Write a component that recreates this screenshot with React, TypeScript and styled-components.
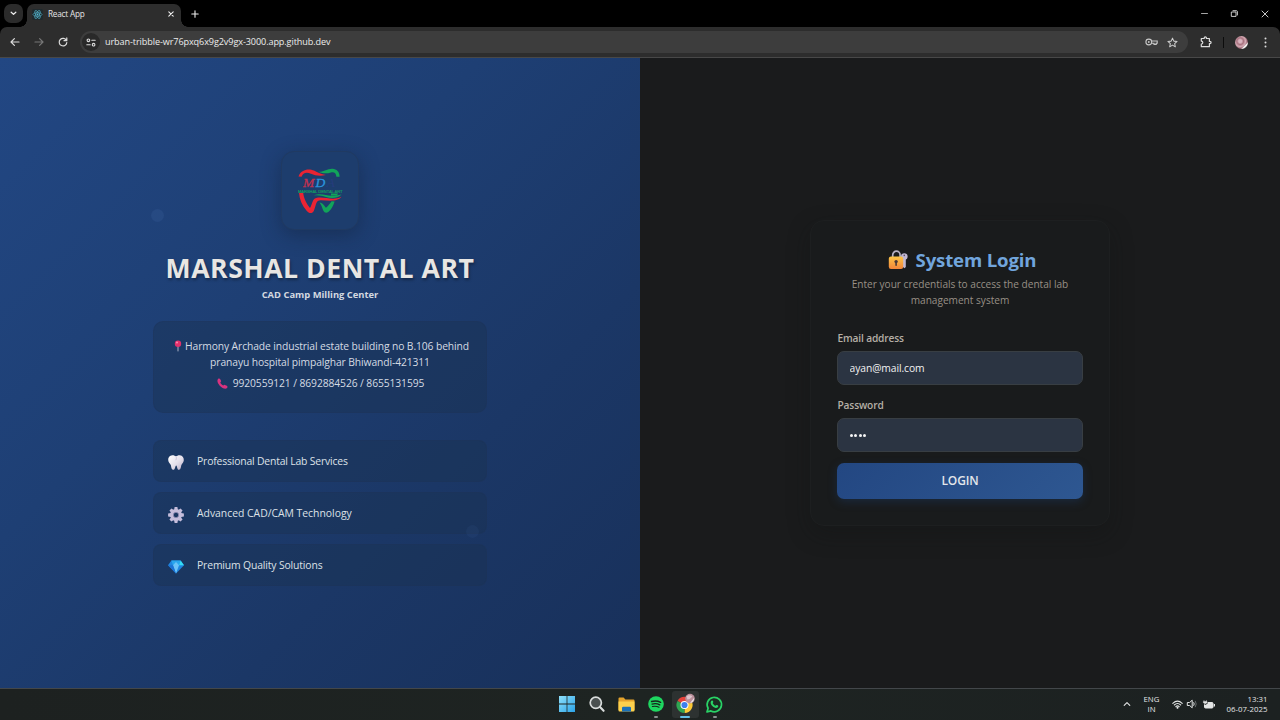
import React from "react";
import styled, { createGlobalStyle, css } from "styled-components";

const Global = createGlobalStyle`
  *, *::before, *::after { box-sizing: border-box; }
  html, body { margin: 0; padding: 0; }
  body { width: 1280px; height: 720px; overflow: hidden; background: #000; font-family: "Open Sans", "Noto Sans", sans-serif; }
  svg { display: block; flex: none; overflow: visible; }
`;

const Screen = styled.div`
  display: flex;
  flex-direction: column;
  width: 1280px;
  height: 720px;
`;

/* ---------- browser chrome ---------- */

const TabStrip = styled.div`
  display: flex;
  height: 27px;
  background: #000;
  padding-left: 4px;
`;

const TabMenuButton = styled.div`
  display: flex;
  align-items: center;
  justify-content: center;
  width: 19px;
  height: 19px;
  margin: 4px 4px 0 0;
  border-radius: 7px;
  background: #2b2b2b;
`;

const Tab = styled.div`
  position: relative;
  display: flex;
  align-items: center;
  width: 154px;
  height: 23px;
  margin-top: 4px;
  padding: 0 7px 3px 5px;
  border-radius: 7px 7px 0 0;
  background: #2d2d2d;
  &::before, &::after {
    content: "";
    position: absolute;
    bottom: 0;
    width: 7px;
    height: 7px;
  }
  &::before { left: -7px; background: radial-gradient(circle at 0 0, transparent 6.5px, #2d2d2d 7px); }
  &::after { right: -7px; background: radial-gradient(circle at 100% 0, transparent 6.5px, #2d2d2d 7px); }
`;

const TabTitle = styled.span`
  flex: 1;
  margin-left: 5px;
  font-size: 8.2px;
  line-height: 12px;
  letter-spacing: -0.2px;
  color: #e6e6e6;
`;

const NewTab = styled.div`
  display: flex;
  align-items: center;
  margin-left: 9.5px;
`;

const WindowControls = styled.div`
  display: flex;
  align-items: center;
  gap: 23px;
  margin-left: auto;
  padding-right: 11.5px;
`;

const Toolbar = styled.div`
  display: flex;
  align-items: center;
  height: 31px;
  padding: 0 13px 0 9px;
  border-bottom: 1px solid #484848;
  border-radius: 7px 7px 0 0;
  background: #2d2d2d;
`;

const NavButtons = styled.div`
  display: flex;
  align-items: center;
  gap: 12px;
  width: 71px;
`;

const AddressBar = styled.div`
  display: flex;
  align-items: center;
  width: 1108px;
  height: 22px;
  padding: 0 10.5px 0 2px;
  border-radius: 11px;
  background: #3d3d3d;
`;

const SiteInfo = styled.div`
  display: flex;
  align-items: center;
  justify-content: center;
  width: 18px;
  height: 18px;
  border-radius: 50%;
  background: #292929;
`;

const Url = styled.span`
  flex: 1;
  margin-left: 5px;
  font-size: 9.1px;
  line-height: 14px;
  letter-spacing: -0.1px;
  color: #ececec;
`;

const AddressActions = styled.div`
  display: flex;
  align-items: center;
  gap: 9px;
`;

const ToolbarActions = styled.div`
  display: flex;
  align-items: center;
  margin-left: auto;
`;

const Divider = styled.div`
  width: 1px;
  height: 11px;
  margin: 0 11px 0 11px;
  background: #0c0c0c;
`;

const Avatar = styled.div`
  width: 13px;
  height: 13px;
  margin-right: 16px;
  border-radius: 50%;
  background: linear-gradient(135deg, transparent 72%, #f2eeee 76%), radial-gradient(circle at 40% 40%, #d9b4bf 0 14%, #a8727f 30%, #d3aab4 48%, #94606d 66%, #b98c97);
`;

/* ---------- page ---------- */

const Page = styled.main`
  display: flex;
  height: 630px;
`;

const BrandPanel = styled.section`
  position: relative;
  display: flex;
  flex-direction: column;
  align-items: center;
  width: 640px;
  padding-top: 93px;
  background: linear-gradient(135deg, #224783 0%, #1e3f74 38%, #1b3766 68%, #18305a 100%);
`;

const Bubble = styled.div<{ $x: number; $y: number; $size: number; $alpha: number }>`
  position: absolute;
  left: ${(p) => p.$x}px;
  top: ${(p) => p.$y}px;
  width: ${(p) => p.$size}px;
  height: ${(p) => p.$size}px;
  border-radius: 50%;
  background: rgba(90, 130, 200, ${(p) => p.$alpha});
`;

const LogoCard = styled.div`
  display: flex;
  align-items: center;
  justify-content: center;
  width: 78px;
  height: 79px;
  border: 1px solid #203a62;
  border-radius: 13px;
  background: #1d3d6d;
  box-shadow: 0 5px 20px rgba(16, 28, 50, 0.42);
`;

const BrandName = styled.h1`
  margin: 20px 0 0;
  font-size: 26.6px;
  font-weight: 700;
  line-height: 36px;
  letter-spacing: 0.52px;
  white-space: nowrap;
  color: #e8e6e3;
  text-shadow: 1px 2px 3px rgba(0, 0, 0, 0.35);
`;

const BrandTagline = styled.p`
  margin: 2px 0 0;
  font-size: 9.4px;
  font-weight: 700;
  line-height: 14px;
  white-space: nowrap;
  color: #d4d9e0;
`;

const panelSurface = css`
  width: 334px;
  border: 1px solid rgba(30, 52, 88, 0.25);
  background: rgba(27, 50, 82, 0.42);
`;

const ContactCard = styled.div`
  ${panelSurface}
  height: 92px;
  margin-top: 19px;
  padding: 16px 0;
  border-radius: 10px;
  text-align: center;
`;

const ContactLine = styled.div<{ $gap?: number; $indent?: number; $tracking?: number }>`
  display: flex;
  align-items: center;
  justify-content: center;
  height: 16px;
  margin-top: ${(p) => p.$gap ?? 0}px;
  padding-left: ${(p) => p.$indent ?? 0}px;
  font-size: 10.3px;
  line-height: 16px;
  letter-spacing: ${(p) => p.$tracking ?? 0}px;
  white-space: nowrap;
  color: #d5dbe3;
`;

const IconGap = styled.span<{ $w: number }>`
  flex: none;
  width: ${(p) => p.$w}px;
`;

const FeatureList = styled.ul`
  display: flex;
  flex-direction: column;
  gap: 10px;
  margin: 27px 0 0;
  padding: 0;
  list-style: none;
`;

const Feature = styled.li`
  ${panelSurface}
  display: flex;
  align-items: center;
  height: 42px;
  padding-left: 14px;
  border-radius: 8px;
`;

const FeatureText = styled.span<{ $tracking: number }>`
  margin-left: 13px;
  font-size: 10.4px;
  line-height: 16px;
  letter-spacing: ${(p) => p.$tracking}px;
  white-space: nowrap;
  color: #dde1e7;
`;

const FeatureIcon = styled.span`
  padding-top: 3px;
`;

const LoginPanel = styled.section`
  display: flex;
  flex-direction: column;
  align-items: center;
  width: 640px;
  padding-top: 162px;
  background: #1a1b1c;
`;

const LoginCard = styled.form`
  display: flex;
  flex-direction: column;
  width: 300px;
  height: 306px;
  padding: 27px 26px 0;
  border: 1px solid #1d1f20;
  border-radius: 14px;
  background: #191b1c;
  box-shadow: 0 8px 22px rgba(18, 19, 20, 0.35);
`;

const LoginTitle = styled.h2`
  display: flex;
  align-items: center;
  justify-content: center;
  gap: 8px;
  height: 24px;
  margin: 0;
  padding-left: 4px;
  font-size: 18.6px;
  font-weight: 700;
  line-height: 24px;
  letter-spacing: -0.15px;
  white-space: nowrap;
  color: #71a5dc;
`;

const LoginHint = styled.p`
  margin: 4px 0 0;
  font-size: 10.1px;
  line-height: 16px;
  text-align: center;
  white-space: nowrap;
  color: #989086;
`;

const Label = styled.label<{ $top: number }>`
  margin-top: ${(p) => p.$top}px;
  padding-left: 0.5px;
  font-size: 10.2px;
  font-weight: 600;
  line-height: 14px;
  letter-spacing: -0.16px;
  color: #b5afa6;
`;

const Input = styled.input`
  width: 246px;
  height: 34px;
  margin: 6px 0 0;
  padding: 0 11.5px;
  border: 1px solid #383e43;
  border-radius: 7px;
  outline: none;
  background: #2b3442;
  font-family: "Open Sans", "Noto Sans", sans-serif;
  font-size: 10.3px;
  letter-spacing: -0.07px;
  color: #f2f2f2;
`;

const PasswordField = styled.div`
  display: flex;
  align-items: center;
  gap: 1.3px;
  width: 246px;
  height: 34px;
  margin-top: 6px;
  padding: 1px 0 0 12px;
  border: 1px solid #383e43;
  border-radius: 7px;
  background: #2b3442;
`;

const Dot = styled.span`
  width: 3px;
  height: 3px;
  border-radius: 50%;
  background: #f5f5f5;
`;

const LoginButton = styled.button`
  width: 246px;
  height: 36px;
  margin: 11px 0 0;
  padding: 0;
  border: 0;
  border-radius: 7px;
  background: linear-gradient(135deg, #234782, #2e5791);
  box-shadow: 0 3px 10px rgba(30, 66, 120, 0.35);
  font-family: "Open Sans", "Noto Sans", sans-serif;
  font-size: 12px;
  font-weight: 600;
  line-height: 36px;
  letter-spacing: -0.1px;
  color: #e3e6ea;
`;

/* ---------- taskbar ---------- */

const Taskbar = styled.footer`
  display: flex;
  height: 32px;
  padding-left: 553.5px;
  border-top: 1px solid #43474a;
  background: linear-gradient(90deg, #1d2120, #1e2422 50%, #1c2121);
`;

const TaskSlot = styled.div<{ $active?: boolean }>`
  position: relative;
  display: flex;
  align-items: center;
  justify-content: center;
  width: 27px;
  height: 27px;
  margin: 2px 2.5px 0 0;
  border-radius: 3px;
  background: ${(p) => (p.$active ? "#2d3231" : "transparent")};
`;

const RunMark = styled.i<{ $active?: boolean }>`
  position: absolute;
  bottom: 0;
  width: ${(p) => (p.$active ? 10 : 4)}px;
  height: 2px;
  border-radius: 1px;
  background: ${(p) => (p.$active ? "#62bfe8" : "#8b9190")};
`;

const TaskIcon = styled.span`
  margin-bottom: 1px;
`;

const Tray = styled.div`
  display: flex;
  align-items: center;
  margin-left: auto;
  padding: 0 12.5px 1px 0;
  color: #e4e6e6;
`;

const TrayText = styled.div<{ $w: number; $align: "center" | "right" }>`
  width: ${(p) => p.$w}px;
  font-size: 7.8px;
  line-height: 10.5px;
  letter-spacing: 0.04px;
  text-align: ${(p) => p.$align};
  white-space: nowrap;
`;

const TrayIcons = styled.div`
  display: flex;
  align-items: center;
  gap: 4.5px;
  margin: 0 11px 0 8px;
`;

/* ---------- drawings ---------- */

type StrokeProps = { w: number; h: number; box: string; d: string; color?: string; sw?: number };

const Stroke = ({ w, h, box, d, color = "#dcdcdc", sw = 1.2 }: StrokeProps) => (
  <svg width={w} height={h} viewBox={box} fill="none" stroke={color} strokeWidth={sw} strokeLinecap="round" strokeLinejoin="round">
    <path d={d} />
  </svg>
);

const ReactMark = () => (
  <svg width="11" height="11" viewBox="0 0 22 22" fill="none" stroke="#4fa9c0" strokeWidth="1.4">
    <rect width="22" height="22" rx="3" fill="#1f2a2e" stroke="none" />
    <ellipse cx="11" cy="11" rx="9" ry="3.6" />
    <ellipse cx="11" cy="11" rx="9" ry="3.6" transform="rotate(60 11 11)" />
    <ellipse cx="11" cy="11" rx="9" ry="3.6" transform="rotate(120 11 11)" />
    <circle cx="11" cy="11" r="1.8" fill="#58bcd6" stroke="none" />
  </svg>
);

const Logo = () => (
  <svg width="50" height="46" viewBox="-2 0 50 46">
    <path d="M1.5 8.5 C4 1 12 0.2 17 2.6 C21 4.6 24 6.4 29 7 C23 8.4 18 7.6 14 5.8 C9 3.6 6 5.2 4.6 8.8 Z" fill="#ea2433" />
    <path d="M21.5 3.8 C27 4.4 31 -0.2 37 1 C41 2 42.6 5 42.6 8.8 L39.4 8.8 C39 5.2 37.4 3.8 34 4.4 C30 5.4 27 6 21.5 3.8 Z" fill="#12a45a" />
    <path d="M2 25 L6.2 25 C7 31 10 36.6 13 40 C15.6 36 15 30.6 20 29.8 C28 28.6 36 33 44.5 28.8 C41 34 32 32.6 24 32.2 C18.6 32 19.4 36.4 17 42.4 C15.4 46 12 45.6 9.8 43 C5 37.6 2.4 31 2 25 Z" fill="#ea2433" />
    <path d="M17 27.4 C24 24.6 29 28 35 27.8 C38 27.7 41 27 44.6 26.4 C40 30.6 34 30.4 29 29 C25 27.8 22 27 17 27.4 Z" fill="#12a45a" />
    <path d="M34 25.4 L41 25.4 L40 27.4 L34 27.6 Z" fill="#12a45a" />
    <path d="M22.5 34.5 C26 35 27 37.4 29 39.8 C31.4 37.6 33 35.6 34.6 33.2 L37.6 33.4 C36.4 37.6 34.4 41 31.6 43.8 C29.6 45.4 27.4 45 26.4 42.8 C25.2 40 24.6 37 22.5 34.5 Z" fill="#12a45a" />
    <g fontFamily="Liberation Serif, serif" fontStyle="italic" fontSize="13.5">
      <text x="6" y="19.2" fill="#c2314f" stroke="#c2314f" strokeWidth="0.3">M</text>
      <text x="18.5" y="19.2" fill="#2b95dc" stroke="#2b95dc" strokeWidth="0.3">D</text>
      <text x="29.5" y="19.2" fill="#263c7c">A</text>
    </g>
    <text x="1" y="24.6" fontFamily="Liberation Sans, sans-serif" fontSize="4" fill="#159a63" stroke="#159a63" strokeWidth="0.2">MARSHAL DENTAL ART</text>
  </svg>
);

const PinIcon = () => (
  <svg width="8" height="12" viewBox="0 0 8 12">
    <path d="M3.5 6 h1 v5 l-.5 .8 -.5 -.8z" fill="#a9b0c4" />
    <circle cx="4" cy="3.7" r="3.2" fill="#e0306c" />
    <circle cx="3" cy="2.6" r="1" fill="#f58cae" />
  </svg>
);

const PhoneIcon = () => (
  <svg width="11" height="11" viewBox="0 0 11 11">
    <path d="M1.2 .8 C2 .1 2.9 .5 3.4 1.5 L4.1 3.1 C4.3 3.8 3.5 4.2 3.3 4.6 C3.8 5.8 5 7 6.3 7.6 C6.8 7.3 7.2 6.6 7.9 6.9 L9.8 7.8 C10.6 8.3 10.8 9.1 10.1 9.9 C8.8 11.2 6.4 10.9 3.6 8.5 C.6 5.7 -.4 2.6 1.2 .8Z" fill="#d9337f" />
  </svg>
);

const ToothIcon = () => (
  <svg width="16" height="15" viewBox="0 0 16 15">
    <defs>
      <linearGradient id="tooth" x1="0" y1="0" x2="1" y2="1">
        <stop offset="0" stopColor="#fff" />
        <stop offset=".55" stopColor="#e4dfea" />
        <stop offset="1" stopColor="#b9acc6" />
      </linearGradient>
    </defs>
    <path d="M4.3 .3 C6 .2 7 1 8 1.2 C9 1 10 .2 11.8 .3 C14.6 .5 16 2.8 15.8 5.2 C15.6 7.6 14 8.6 13.4 10 C12.8 11.6 13 14.6 11 14.8 C8.9 14.9 9.3 10.6 8.2 10.4 C7 10.6 7.4 14.9 5.2 14.8 C3.2 14.6 3.3 11.4 2.8 10 C2.2 8.6 .4 7.6 .2 5 C0 2.6 1.6 .5 4.3 .3Z" fill="url(#tooth)" />
    <path d="M8 1.4 C8.6 2.6 8.4 4 7.8 5.2" fill="none" stroke="#c4b9cf" strokeWidth=".8" />
  </svg>
);

const GearIcon = () => (
  <svg width="16" height="16" viewBox="-8 -8 16 16">
    <g fill="#c5bddb">
      {[0, 45, 90, 135, 180, 225, 270, 315].map((a) => (
        <path key={a} d="M-1.9 -5 L-1.4 -7.9 H1.4 L1.9 -5Z" transform={`rotate(${a})`} />
      ))}
    </g>
    <circle r="4.3" fill="none" stroke="#c5bddb" strokeWidth="3.2" />
    <circle r="2.7" fill="none" stroke="#a89cc4" strokeWidth=".6" />
  </svg>
);

const GemIcon = () => (
  <svg width="16" height="14" viewBox="0 0 16 14">
    <path d="M3.4 .6 H12.6 L16 5.2 L8 13.6 L0 5.2Z" fill="#1f86e0" />
    <path d="M3.4 .6 H12.6 L11 5.2 H5Z" fill="#2aa7ee" />
    <path d="M12.6 .6 L16 5.2 H11Z" fill="#35dcf4" />
    <path d="M5 5.2 L8 2 L11 5.2 L8 13.6Z" fill="#6cc3f8" />
    <path d="M0 5.2 H5 L8 13.6Z" fill="#1c72d4" />
  </svg>
);

const LockIcon = () => (
  <svg width="20" height="20" viewBox="0 0 20 20">
    <defs>
      <linearGradient id="lock" x1="0" y1="0" x2="0" y2="1">
        <stop offset="0" stopColor="#fcc547" />
        <stop offset="1" stopColor="#f2853a" />
      </linearGradient>
    </defs>
    <g fill="#c2b8d2">
      <circle cx="16.3" cy="6.6" r="3.3" />
      <path d="M15 8.6 H17.8 V17 L16.4 18.2 L15 17Z" />
      <circle cx="16.3" cy="5.4" r=".8" fill="#574f66" />
    </g>
    <path d="M4.7 8 V5.2 A3.7 4 0 0 1 12.1 5.2 V8" fill="none" stroke="#b5b1c4" strokeWidth="1.7" />
    <rect x=".8" y="6.6" width="14.4" height="12.4" rx="2.2" fill="url(#lock)" />
    <circle cx="8.1" cy="11.6" r="1.7" fill="#4a3837" />
    <rect x="7.3" y="12" width="1.6" height="4" rx=".7" fill="#4a3837" />
  </svg>
);

const WindowsIcon = () => (
  <svg width="16" height="16" viewBox="0 0 16 16">
    <defs>
      <linearGradient id="win" x1="0" y1="0" x2="1" y2="1">
        <stop offset="0" stopColor="#8fe0fb" />
        <stop offset="1" stopColor="#2ba3e8" />
      </linearGradient>
    </defs>
    <path d="M0 0H7.6V7.6H0Z M8.4 0H16V7.6H8.4Z M0 8.4H7.6V16H0Z M8.4 8.4H16V16H8.4Z" fill="url(#win)" />
  </svg>
);

const SearchIcon = () => (
  <svg width="16" height="16" viewBox="0 0 16 16" fill="none" stroke="#d9dcdc" strokeLinecap="round">
    <circle cx="6.8" cy="6.8" r="5.6" strokeWidth="1.7" fill="#4a5050" />
    <path d="M11 11 L14.6 14.8" strokeWidth="2.1" />
  </svg>
);

const FolderIcon = () => (
  <svg width="17" height="15" viewBox="0 0 17 15">
    <path d="M.5 1.6 Q.5 .5 1.6 .5 H5.6 L7.4 2.4 H15.4 Q16.5 2.4 16.5 3.5 V13 H.5Z" fill="#e5a32c" />
    <path d="M.5 4.4 H16.5 V13.4 Q16.5 14.5 15.4 14.5 H1.6 Q.5 14.5 .5 13.4Z" fill="#fbd04d" />
    <path d="M4 14.5 V11 Q4 9.8 5.2 9.8 H11.8 Q13 9.8 13 11 V14.5Z" fill="#1a70b8" />
  </svg>
);

const SpotifyIcon = () => (
  <svg width="16" height="16" viewBox="0 0 16 16">
    <circle cx="8" cy="8" r="7.8" fill="#1ed760" />
    <g fill="none" stroke="#17251c" strokeLinecap="round">
      <path d="M3.6 5.5 Q8.4 4 12.6 6.3" strokeWidth="1.5" />
      <path d="M4 8.1 Q8.2 6.9 11.8 8.9" strokeWidth="1.3" />
      <path d="M4.4 10.5 Q8 9.6 11 11.2" strokeWidth="1.1" />
    </g>
  </svg>
);

const ChromeIcon = () => (
  <svg width="22" height="22" viewBox="0 0 22 22">
    <path d="M10.5 12 L3.5 8 A8 8 0 0 1 17.5 8Z" fill="#e5423a" />
    <path d="M10.5 12 L17.5 8 A8 8 0 0 1 10.5 20Z" fill="#fbc935" />
    <path d="M10.5 12 L10.5 20 A8 8 0 0 1 3.5 8Z" fill="#2fa552" />
    <circle cx="10.5" cy="12" r="4" fill="#fff" />
    <circle cx="10.5" cy="12" r="3.1" fill="#3d80ec" />
    <circle cx="16" cy="5.6" r="4.8" fill="#b98f9b" />
    <path d="M12.4 3.6 Q15.4 1 18.4 3.4 Q16.4 6 13.4 6.4Z" fill="#dcc3ca" />
    <path d="M20 5 Q20.4 9 16 10.2Z" fill="#f1eded" />
  </svg>
);

const WhatsAppIcon = () => (
  <svg width="17" height="17" viewBox="0 0 17 17">
    <path d="M1 16 L2.1 12.2 A7.2 7.2 0 1 1 4.9 14.9Z" fill="#1c2a22" stroke="#29d366" strokeWidth="1.7" strokeLinejoin="round" />
    <path d="M5.8 4.6 C6.5 4.2 6.9 4.7 7.2 5.6 C7.5 6.4 6.8 6.6 6.7 7.2 C7.3 8.4 8.3 9.3 9.5 9.8 C10 9.5 10.3 8.7 10.9 9 C11.8 9.4 12.5 9.7 12.3 10.3 C11.9 11.7 10.5 12.2 9 11.7 C6.8 10.9 5.4 9.4 4.8 7.7 C4.4 6.3 4.9 5.1 5.8 4.6Z" fill="#29d366" />
  </svg>
);

const WifiIcon = () => (
  <svg width="11" height="9" viewBox="0 0 11 9" fill="none" stroke="#e4e6e6" strokeWidth="1.1" strokeLinecap="round">
    <path d="M.8 3.3 Q5.5 -1 10.2 3.3" />
    <path d="M2.3 5 Q5.5 2.1 8.7 5" />
    <path d="M3.8 6.6 Q5.5 5.1 7.2 6.6" />
    <circle cx="5.5" cy="7.8" r=".5" fill="#e4e6e6" />
  </svg>
);

const SpeakerIcon = () => (
  <svg width="11" height="10" viewBox="0 0 11 10" fill="none" stroke="#e4e6e6" strokeLinejoin="round" strokeLinecap="round">
    <path d="M.7 3.5 H2.6 L5.2 1.2 V8.8 L2.6 6.5 H.7Z" />
    <path d="M6.8 3.6 Q7.8 5 6.8 6.4" />
    <path d="M8.4 2.2 Q10.2 5 8.4 7.8" stroke="#666b6b" />
  </svg>
);

const BatteryIcon = () => (
  <svg width="12" height="9" viewBox="0 0 12 9">
    <rect x="1.5" y="2.5" width="8.5" height="5.5" rx="1" fill="#e4e6e6" stroke="#e4e6e6" />
    <rect x="10.8" y="4" width="1.2" height="2.5" fill="#e4e6e6" />
    <path d="M.3 .6 H4.6 V3.6 L2.4 5 L.3 3.6Z" fill="#1e2322" />
    <path d="M1 0 V1.4 M3.4 0 V1.4 M.4 1.5 H4 V2.8 L2.2 3.8 L.4 2.8Z" fill="#e4e6e6" stroke="#e4e6e6" strokeWidth=".5" />
  </svg>
);

const features = [
  { text: "Professional Dental Lab Services", icon: <ToothIcon />, tracking: -0.18 },
  { text: "Advanced CAD/CAM Technology", icon: <GearIcon />, tracking: -0.01 },
  { text: "Premium Quality Solutions", icon: <GemIcon />, tracking: -0.15 },
];

export default function App() {
  return (
    <Screen>
      <Global />
      <TabStrip>
        <TabMenuButton>
          <Stroke w={7} h={5} box="0 0 7 5" d="M1.2 1.2 L3.5 3.4 L5.8 1.2" color="#eee" sw={1.3} />
        </TabMenuButton>
        <Tab>
          <ReactMark />
          <TabTitle>React App</TabTitle>
          <Stroke w={6} h={6} box="0 0 6 6" d="M.8 .8 L5.2 5.2 M5.2 .8 L.8 5.2" color="#eee" sw={1.1} />
        </Tab>
        <NewTab>
          <Stroke w={8} h={8} box="0 0 8 8" d="M4 .8 V7.2 M.8 4 H7.2" color="#eee" sw={1.1} />
        </NewTab>
        <WindowControls>
          <Stroke w={7} h={7} box="0 0 7 7" d="M.5 3.5 H6.5" color="#cfcfcf" sw={0.8} />
          <Stroke w={7} h={7} box="0 0 7 7" d="M.7 2 H5 V6.4 H.7Z M2 .7 H5.4 Q6.4 .7 6.4 1.8 V5" color="#dedede" sw={0.9} />
          <Stroke w={8} h={8} box="0 0 8 8" d="M1 1 L7 7 M7 1 L1 7" color="#dedede" sw={0.9} />
        </WindowControls>
      </TabStrip>

      <Toolbar>
        <NavButtons>
          <Stroke w={12} h={10} box="0 0 12 10" d="M10 5 H2 M5.4 1.6 L2 5 L5.4 8.4" />
          <Stroke w={12} h={10} box="0 0 12 10" d="M2 5 H10 M6.6 1.6 L10 5 L6.6 8.4" color="#777" />
          <Stroke w={12} h={10} box="0 0 12 10" d="M9.4 3.4 A3.8 3.8 0 1 0 9.8 5.6 M9.8 .9 V3.7 H7" />
        </NavButtons>
        <AddressBar>
          <SiteInfo>
            <Stroke w={10} h={9} box="0 0 10 9" d="M5.8 2.3 H9.2 M.8 6.7 H4.2 M2.4 2.3 m-1.3 0 a1.3 1.3 0 1 0 2.6 0 a1.3 1.3 0 1 0 -2.6 0 M7.6 6.7 m-1.3 0 a1.3 1.3 0 1 0 2.6 0 a1.3 1.3 0 1 0 -2.6 0" sw={1.1} />
          </SiteInfo>
          <Url>urban-tribble-wr76pxq6x9g2v9gx-3000.app.github.dev</Url>
          <AddressActions>
            <svg width="13" height="8" viewBox="0 0 13 8" fill="none" stroke="#c9c9c9" strokeWidth="1.1">
              <circle cx="3.8" cy="4" r="2.9" />
              <circle cx="3.8" cy="4" r=".9" fill="#c9c9c9" stroke="none" />
              <path d="M6.5 3 H12.2 V5.2 H11.2 V6.4 H9 V5.2 H6.5" />
            </svg>
            <Stroke w={11} h={11} box="0 0 24 24" d="M12 2.5 L14.9 9 L22 9.7 L16.7 14.4 L18.2 21.4 L12 17.7 L5.8 21.4 L7.3 14.4 L2 9.7 L9.1 9Z" color="#cfcfcf" sw={2.2} />
          </AddressActions>
        </AddressBar>
        <ToolbarActions>
          <Stroke w={12} h={12} box="0 0 12 12" d="M1.3 2.5 H4.2 V1.9 A1.1 1.1 0 0 1 6.4 1.9 V2.5 H9.4 V5.4 H10 A1.1 1.1 0 0 1 10 7.6 H9.4 V10.7 H1.3 V8.1 A1.5 1.5 0 0 0 1.3 5.1Z" sw={1.2} />
          <Divider />
          <Avatar />
          <svg width="3" height="11" viewBox="0 0 3 11" fill="#dcdcdc">
            <circle cx="1.5" cy="1.5" r="1" />
            <circle cx="1.5" cy="5.5" r="1" />
            <circle cx="1.5" cy="9.5" r="1" />
          </svg>
        </ToolbarActions>
      </Toolbar>

      <Page>
        <BrandPanel>
          <LogoCard>
            <Logo />
          </LogoCard>
          <BrandName>MARSHAL DENTAL ART</BrandName>
          <BrandTagline>CAD Camp Milling Center</BrandTagline>
          <ContactCard>
            <ContactLine $indent={3} $tracking={-0.1}>
              <PinIcon />
              <IconGap $w={3} />
              Harmony Archade industrial estate building no B.106 behind
            </ContactLine>
            <ContactLine $tracking={-0.1}>pranayu hospital pimpalghar Bhiwandi-421311</ContactLine>
            <ContactLine $gap={5} $indent={1} $tracking={-0.09}>
              <PhoneIcon />
              <IconGap $w={5} />
              9920559121 / 8692884526 / 8655131595
            </ContactLine>
          </ContactCard>
          <FeatureList>
            {features.map((f) => (
              <Feature key={f.text}>
                <FeatureIcon>{f.icon}</FeatureIcon>
                <FeatureText $tracking={f.tracking}>{f.text}</FeatureText>
              </Feature>
            ))}
          </FeatureList>
          <Bubble $x={151} $y={151} $size={13} $alpha={0.12} />
          <Bubble $x={466} $y={467} $size={13} $alpha={0.07} />
        </BrandPanel>

        <LoginPanel>
          <LoginCard>
            <LoginTitle>
              <LockIcon />
              System Login
            </LoginTitle>
            <LoginHint>
              Enter your credentials to access the dental lab
              <br />
              management system
            </LoginHint>
            <Label $top={23}>Email address</Label>
            <Input defaultValue="ayan@mail.com" />
            <Label $top={13}>Password</Label>
            <PasswordField>
              <Dot />
              <Dot />
              <Dot />
              <Dot />
            </PasswordField>
            <LoginButton type="button">LOGIN</LoginButton>
          </LoginCard>
        </LoginPanel>
      </Page>

      <Taskbar>
        <TaskSlot><TaskIcon><WindowsIcon /></TaskIcon></TaskSlot>
        <TaskSlot><TaskIcon><SearchIcon /></TaskIcon></TaskSlot>
        <TaskSlot><TaskIcon><FolderIcon /></TaskIcon></TaskSlot>
        <TaskSlot><TaskIcon><SpotifyIcon /></TaskIcon><RunMark /></TaskSlot>
        <TaskSlot $active><TaskIcon><ChromeIcon /></TaskIcon><RunMark $active /></TaskSlot>
        <TaskSlot><TaskIcon><WhatsAppIcon /></TaskIcon><RunMark /></TaskSlot>
        <Tray>
          <Stroke w={8} h={6} box="0 0 8 6" d="M1.2 4.4 L4 1.6 L6.8 4.4" color="#e4e6e6" sw={1.1} />
          <IconGap $w={9} />
          <TrayText $w={24} $align="center">
            ENG
            <br />
            IN
          </TrayText>
          <TrayIcons>
            <WifiIcon />
            <SpeakerIcon />
            <BatteryIcon />
          </TrayIcons>
          <TrayText $w={42} $align="right">
            13:31
            <br />
            06-07-2025
          </TrayText>
        </Tray>
      </Taskbar>
    </Screen>
  );
}
